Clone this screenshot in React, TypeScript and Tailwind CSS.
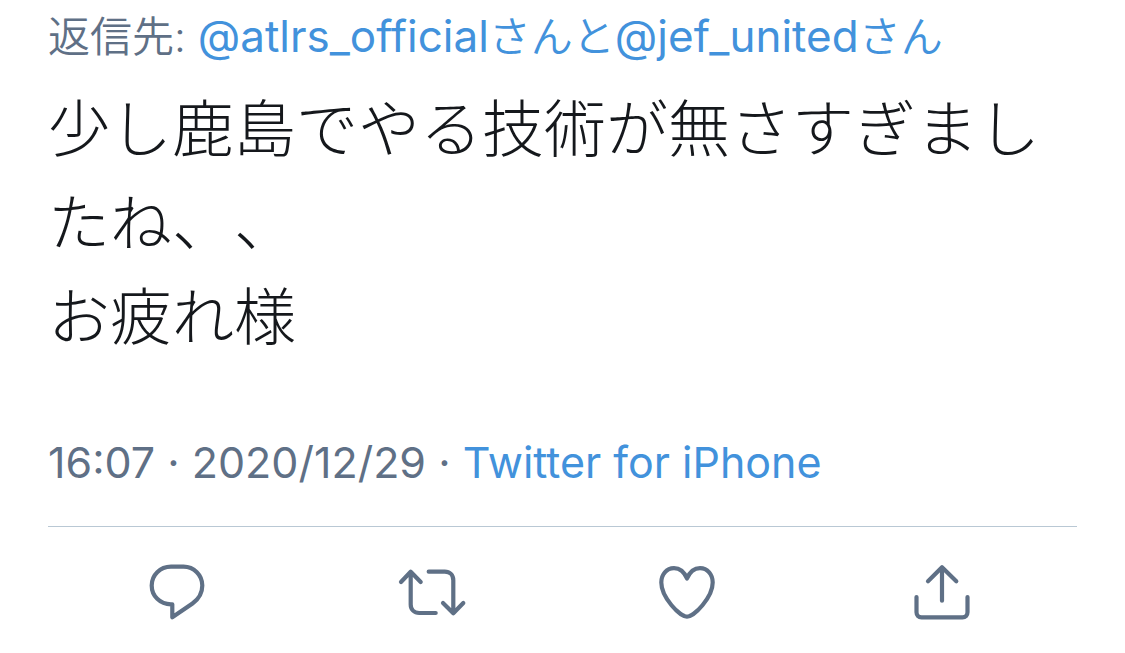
import React from "react";

type ActionProps = {
  label: string;
  children: React.ReactNode;
};

const ActionButton: React.FC<ActionProps> = ({ label, children }) => {
  return (
    <button
      type="button"
      aria-label={label}
      className="flex items-center justify-center"
    >
      <svg
        viewBox="0 0 72 60"
        className="h-[60px] w-[72px]"
        fill="none"
        stroke="currentColor"
        strokeWidth="4.2"
        strokeLinecap="round"
        strokeLinejoin="round"
        aria-hidden="true"
      >
        {children}
      </svg>
    </button>
  );
};

const App: React.FC = () => {
  return (
    <div className="min-h-screen bg-white font-['Inter','Noto_Sans_CJK_JP',sans-serif] text-[#5f7086]">
      <article lang="ja" className="px-12">
        {/* Reply targets */}
        <p className="pt-1.5 text-[42px] leading-[60px] font-[350]">
          返信先:{" "}
          <a href="#atlrs_official" className="text-[#4292dc]">
            <span className="text-[44px] font-normal">@atlrs_official</span>さん
          </a>
          <span className="text-[#4292dc]">と</span>
          <a href="#jef_united" className="text-[#4292dc]">
            <span className="text-[44px] font-normal">@jef_united</span>さん
          </a>
        </p>

        {/* Tweet body */}
        <p className="mt-4 text-[62px] leading-[94px] font-light text-[#15181c] [text-spacing-trim:space-all]">
          少し鹿島でやる技術が無さすぎましたね、、
          <br />
          お疲れ様
        </p>

        {/* Date and client */}
        <p className="mt-[65px] pb-8 text-[43px] leading-[64px]">
          <time dateTime="2020-12-29T16:07">16:07 · 2020/12/29</time> ·{" "}
          <a href="#source" className="text-[#4292dc]">
            Twitter for iPhone
          </a>
        </p>

        {/* Actions */}
        <div className="grid grid-cols-4 border-t border-[#b9c8d4] pt-[35px] pr-2 pl-0.5">
          <ActionButton label="返信">
            <path d="M31.3 42.3H30C19 42.3 10.7 34 10.7 23.5S19 4.7 30 4.7h12.500C53 4.700 61.300 13 61.300 23.500c0 7.500-3.500 13.500-9.800 18L31.300 55.300Z" />
          </ActionButton>
          <ActionButton label="リツイート">
            <path d="M5 20l9.700-10.300L24.700 20M14.700 10v32.500c0 5 3.500 8.500 8.500 8.500h16.500" />
            <path d="M32.700 9.700h16.100c5 0 8.500 3.500 8.500 8.500V51M47 41l10.300 10.300L67.300 41" />
          </ActionButton>
          <ActionButton label="いいね">
            <path d="M36 16.500C33.200 10 28.500 6.200 23 6.200c-7.500 0-12.700 6.300-12.700 14.300 0 15 18.700 34.200 25.700 34.200s25.700-19.200 25.700-34.200c0-8-5.200-14.300-12.700-14.300-5.500 0-10.200 3.800-13 10.300Z" />
          </ActionButton>
          <ActionButton label="共有">
            <path d="M36 38.700V5.500M22 19.300L36 5.300l14.300 14" />
            <path d="M10.500 35v15.300c0 3 2 5 5 5h41c3 0 5-2 5-5V35" />
          </ActionButton>
        </div>
      </article>
    </div>
  );
};

export default App;
